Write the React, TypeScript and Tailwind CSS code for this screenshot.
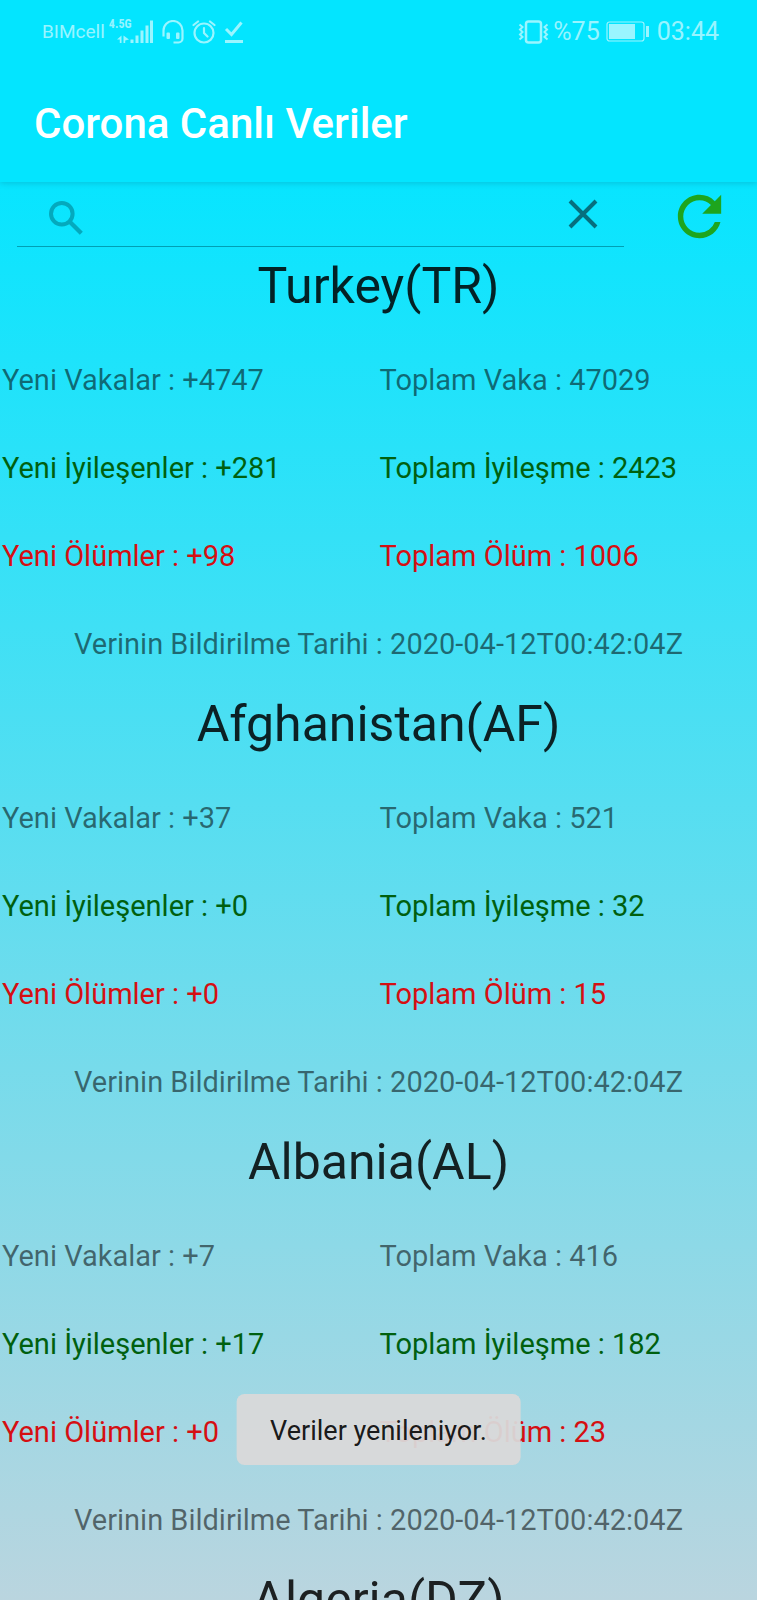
import { useState } from "react";
import { MdRefresh } from "react-icons/md";

type Country = {
  name: string;
  newCases: number;
  totalCases: number;
  newRecovered: number;
  totalRecovered: number;
  newDeaths: number;
  totalDeaths: number;
  date: string;
};

const countries: Country[] = [
  { name: "Turkey(TR)", newCases: 4747, totalCases: 47029, newRecovered: 281, totalRecovered: 2423, newDeaths: 98, totalDeaths: 1006, date: "2020-04-12T00:42:04Z" },
  { name: "Afghanistan(AF)", newCases: 37, totalCases: 521, newRecovered: 0, totalRecovered: 32, newDeaths: 0, totalDeaths: 15, date: "2020-04-12T00:42:04Z" },
  { name: "Albania(AL)", newCases: 7, totalCases: 416, newRecovered: 17, totalRecovered: 182, newDeaths: 0, totalDeaths: 23, date: "2020-04-12T00:42:04Z" },
  { name: "Algeria(DZ)", newCases: 64, totalCases: 1825, newRecovered: 0, totalRecovered: 460, newDeaths: 19, totalDeaths: 275, date: "2020-04-12T00:42:04Z" },
];

function SignalIcon() {
  return (
    <svg viewBox="0 0 37 24" className="h-6 w-[37px]" fill="currentColor" aria-hidden="true">
      <path d="M0 19.500 4.500 15.500V23H2.800v-3.500zM6.500 15.500V23h1.700v-2.500L12 19.500z" />
      <rect x="13.500" y="19.500" width="3" height="3.500" />
      <rect x="18.500" y="15.500" width="3" height="7.500" />
      <rect x="23.500" y="10.500" width="3" height="12.500" />
      <rect x="28.500" y="5.500" width="3" height="17.500" />
      <rect x="33" y="0.500" width="3" height="22.500" />
    </svg>
  );
}

function HeadsetIcon() {
  return (
    <svg viewBox="0 0 22 24" className="h-6 w-[22px]" fill="none" stroke="currentColor" strokeWidth="2.200" aria-hidden="true">
      <path d="M1.500 16.500V10.500a9.500 9.500 0 0 1 19 0V18.500a4 4 0 0 1-4 4H11.500" />
      <rect x="4.500" y="12.500" width="3.500" height="6.500" rx="1" fill="currentColor" stroke="none" />
      <rect x="14" y="12.500" width="3.500" height="6.500" rx="1" fill="currentColor" stroke="none" />
    </svg>
  );
}

function AlarmIcon() {
  return (
    <svg viewBox="0 0 24 24" className="size-6" fill="none" stroke="currentColor" strokeWidth="2.200" strokeLinecap="round" aria-hidden="true">
      <circle cx="12" cy="13" r="9.500" />
      <path d="M12 8v5l3.500 3.500M1.500 5 6 1.500M22.500 5 18 1.500" />
    </svg>
  );
}

function DoneIcon() {
  return (
    <svg viewBox="0 0 20 24" className="h-6 w-5" fill="none" stroke="currentColor" strokeWidth="3" aria-hidden="true">
      <path d="M2 9 7.500 14.500 17.500 2.500M1 21.500h18" />
    </svg>
  );
}

function VibrateIcon() {
  return (
    <svg viewBox="0 0 31 24" className="h-6 w-[31px]" fill="none" stroke="currentColor" strokeWidth="2.500" aria-hidden="true">
      <rect x="8" y="1.500" width="15" height="21" rx="2.500" />
      <path d="M1.500 4.500l3 2.500-2.500 2.500 2.500 2.500-2.500 2.500 2.500 2.500-3 2.500M29.500 4.500l-3 2.500 2.500 2.500-2.500 2.500 2.500 2.500-2.500 2.500 3 2.500" strokeWidth="2" />
    </svg>
  );
}

function BatteryIcon() {
  return (
    <svg viewBox="0 0 43 22" className="h-[22px] w-[43px]" fill="none" stroke="currentColor" aria-hidden="true">
      <rect x="1" y="1" width="37" height="19" rx="2.500" strokeWidth="1.200" />
      <rect x="3" y="3" width="26" height="15" fill="currentColor" stroke="none" />
      <rect x="40" y="5" width="3" height="11" fill="currentColor" stroke="none" />
    </svg>
  );
}

function SearchIcon() {
  return (
    <svg viewBox="0 0 34 34" className="size-[34px] shrink-0" fill="none" stroke="currentColor" strokeWidth="4" aria-hidden="true">
      <circle cx="12.800" cy="12.800" r="10.800" />
      <path d="M20.500 20.500 32.300 32.300" strokeWidth="4.300" />
    </svg>
  );
}

function ClearIcon() {
  return (
    <svg viewBox="0 0 30 30" className="size-[30px]" fill="none" stroke="currentColor" strokeWidth="4" aria-hidden="true">
      <path d="M2 2 28 28M28 2 2 28" />
    </svg>
  );
}

function StatusBar() {
  return (
    <div className="flex h-16 items-center justify-between pr-[38px] pl-[42px] text-white/60">
      <div className="flex items-center">
        <span className="text-[19px] leading-6">BIMcell</span>
        <div className="relative ml-3 flex">
          <SignalIcon />
          <span className="absolute -top-1 -left-2 font-['Roboto_Condensed',Roboto,sans-serif] text-[12px] leading-4 font-bold">4.5G</span>
        </div>
        <div className="ml-2 flex items-center gap-2">
          <HeadsetIcon />
          <AlarmIcon />
          <DoneIcon />
        </div>
      </div>
      <div className="flex items-center text-[25px] leading-7">
        <VibrateIcon />
        <span className="ml-1">%75</span>
        <span className="mr-2 ml-1.5">
          <BatteryIcon />
        </span>
        <span>03:44</span>
      </div>
    </div>
  );
}

function Stat({ left, right, color }: { left: string; right: string; color: string }) {
  return (
    <div className={`grid h-[88px] grid-cols-2 items-center pl-[2px] ${color}`}>
      <p>{left}</p>
      <p>{right}</p>
    </div>
  );
}

function CountryBlock({ country }: { country: Country }) {
  return (
    <li className="text-[29px] leading-9">
      <h2 className="pb-3.5 text-center text-[50px] leading-[72px] text-black/85">{country.name}</h2>
      <Stat color="text-black/54" left={`Yeni Vakalar : +${country.newCases}`} right={`Toplam Vaka : ${country.totalCases}`} />
      <Stat color="text-[#00600f]" left={`Yeni İyileşenler : +${country.newRecovered}`} right={`Toplam İyileşme : ${country.totalRecovered}`} />
      <Stat color="text-[#d50f12]" left={`Yeni Ölümler : +${country.newDeaths}`} right={`Toplam Ölüm : ${country.totalDeaths}`} />
      <p className="flex h-[88px] items-center justify-center text-black/54">Verinin Bildirilme Tarihi : {country.date}</p>
    </li>
  );
}

export default function App() {
  const [query, setQuery] = useState("");
  const shown = countries.filter((c) => c.name.toLowerCase().includes(query.toLowerCase()));

  return (
    <div className="relative flex h-screen flex-col overflow-hidden font-[Roboto,sans-serif]">
      <header className="z-10 shrink-0 bg-[#03e5ff] shadow-[0_1px_6px_rgba(0,60,80,0.22)]">
        <StatusBar />
        <h1 className="flex h-[118px] items-center px-[34px] text-[42px] font-medium text-white">Corona Canlı Veriler</h1>
      </header>

      <main className="flex min-h-0 flex-1 flex-col bg-linear-to-b/srgb from-[#07e5ff] to-[#bad5df]">
        <div className="flex h-[68px] shrink-0 items-center pr-[25px] pl-[17px]">
          <div className="flex h-[65px] flex-1 items-center self-start border-b border-[#00a0b4] pr-[26px] pl-8">
            <span className="mt-2 text-[#04a9bd]">
              <SearchIcon />
            </span>
            <input
              type="text"
              aria-label="Ülke ara"
              value={query}
              onChange={(e) => setQuery(e.target.value)}
              className="min-w-0 flex-1 bg-transparent px-2 text-[29px] text-black/85 outline-none"
            />
            <button type="button" aria-label="Temizle" onClick={() => setQuery("")} className="text-[#066f7e]">
              <ClearIcon />
            </button>
          </div>
          <button type="button" aria-label="Yenile" className="ml-[43px] text-[#1ea51e]">
            <MdRefresh className="size-[65px]" />
          </button>
        </div>
        <ul className="min-h-0 flex-1 overflow-hidden">
          {shown.map((c) => (
            <CountryBlock key={c.name} country={c} />
          ))}
        </ul>
      </main>

      <div
        role="status"
        className="absolute bottom-[135px] left-1/2 z-20 -translate-x-1/2 rounded-lg bg-[#d9d9d9]/95 px-[34px] pt-5 pb-4 text-[27px] leading-[35px] whitespace-nowrap text-black/90"
      >
        Veriler yenileniyor.
      </div>
    </div>
  );
}
